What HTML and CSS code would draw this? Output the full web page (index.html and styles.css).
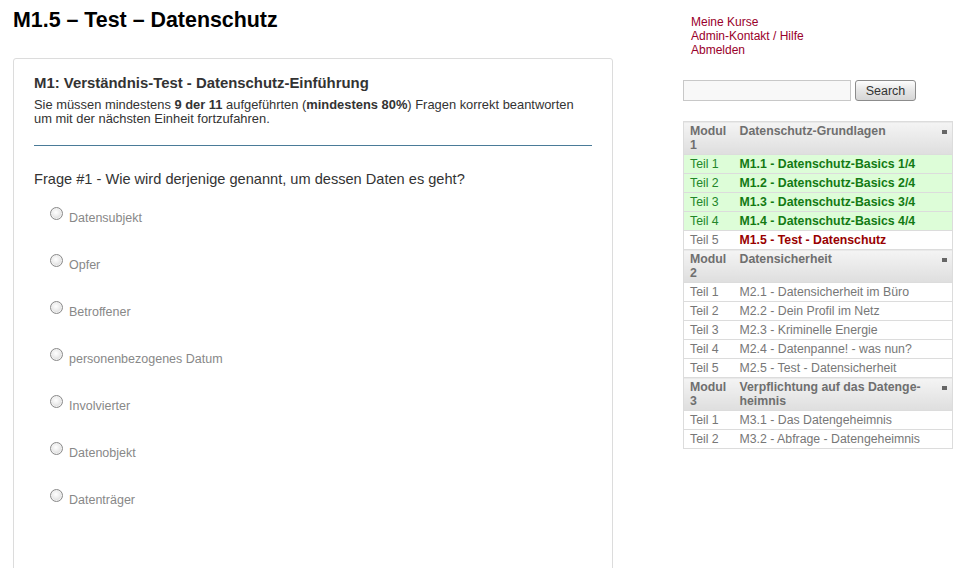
FILE: index.html
```html
<!DOCTYPE html>
<html lang="de">
<head>
<meta charset="utf-8">
<title>M1.5 – Test – Datenschutz</title>
<link rel="stylesheet" href="styles.css">
</head>
<body>
<div class="page">
  <main class="main">
    <h1 class="title">M1.5 – Test – Datenschutz</h1>
    <section class="card">
      <h2 class="card-title">M1: Verständnis-Test - Datenschutz-Einführung</h2>
      <p class="intro">Sie müssen mindestens <b>9 der 11</b> aufgeführten (<b>mindestens 80%</b>) Fragen korrekt beantworten<br>um mit der nächsten Einheit fortzufahren.</p>
      <hr class="rule">
      <p class="question">Frage #1 - Wie wird derjenige genannt, um dessen Daten es geht?</p>
      <div class="options">
        <label class="option"><input type="radio" name="q1" class="radio"><span>Datensubjekt</span></label>
        <label class="option"><input type="radio" name="q1" class="radio"><span>Opfer</span></label>
        <label class="option"><input type="radio" name="q1" class="radio"><span>Betroffener</span></label>
        <label class="option"><input type="radio" name="q1" class="radio"><span>personenbezogenes Datum</span></label>
        <label class="option"><input type="radio" name="q1" class="radio"><span>Involvierter</span></label>
        <label class="option"><input type="radio" name="q1" class="radio"><span>Datenobjekt</span></label>
        <label class="option"><input type="radio" name="q1" class="radio"><span>Datenträger</span></label>
      </div>
    </section>
  </main>
  <aside class="sidebar">
    <nav class="links">
      <a href="#">Meine Kurse</a>
      <a href="#">Admin-Kontakt / Hilfe</a>
      <a href="#">Abmelden</a>
    </nav>
    <form class="search">
      <input type="text" class="search-input">
      <button type="button" class="search-btn">Search</button>
    </form>
    <table class="course">
      <colgroup><col class="col1"><col class="col2"><col class="col3"></colgroup>
      <tr class="head"><td class="c1">Modul 1</td><td class="c2">Datenschutz-Grundlagen</td><td class="c3"><span class="toggle"></span></td></tr>
      <tr class="done"><td class="c1">Teil 1</td><td colspan="2"><b>M1.1 - Datenschutz-Basics 1/4</b></td></tr>
      <tr class="done"><td class="c1">Teil 2</td><td colspan="2"><b>M1.2 - Datenschutz-Basics 2/4</b></td></tr>
      <tr class="done"><td class="c1">Teil 3</td><td colspan="2"><b>M1.3 - Datenschutz-Basics 3/4</b></td></tr>
      <tr class="done"><td class="c1">Teil 4</td><td colspan="2"><b>M1.4 - Datenschutz-Basics 4/4</b></td></tr>
      <tr class="current"><td class="c1">Teil 5</td><td colspan="2"><b>M1.5 - Test - Datenschutz</b></td></tr>
      <tr class="head"><td class="c1">Modul 2</td><td class="c2">Datensicherheit</td><td class="c3"><span class="toggle"></span></td></tr>
      <tr><td class="c1">Teil 1</td><td colspan="2">M2.1 - Datensicherheit im Büro</td></tr>
      <tr><td class="c1">Teil 2</td><td colspan="2">M2.2 - Dein Profil im Netz</td></tr>
      <tr><td class="c1">Teil 3</td><td colspan="2">M2.3 - Kriminelle Energie</td></tr>
      <tr><td class="c1">Teil 4</td><td colspan="2">M2.4 - Datenpanne! - was nun?</td></tr>
      <tr><td class="c1">Teil 5</td><td colspan="2">M2.5 - Test - Datensicherheit</td></tr>
      <tr class="head"><td class="c1">Modul 3</td><td class="c2">Verpflichtung auf das Datenge-<br>heimnis</td><td class="c3"><span class="toggle"></span></td></tr>
      <tr><td class="c1">Teil 1</td><td colspan="2">M3.1 - Das Datengeheimnis</td></tr>
      <tr><td class="c1">Teil 2</td><td colspan="2">M3.2 - Abfrage - Datengeheimnis</td></tr>
    </table>
  </aside>
</div>
</body>
</html>
```
FILE: styles.css
```css
* { box-sizing: border-box; }
html, body {
  margin: 0;
  padding: 0;
  background: #fff;
  font-family: "Liberation Sans", Arial, sans-serif;
  color: #333;
  overflow: hidden;
}
.page {
  display: flex;
  gap: 70px;
  padding: 8px 0 0 13px;
}
.main { width: 600px; flex: none; }
.title {
  margin: 0;
  font-size: 21.4px;
  line-height: 25px;
  font-weight: bold;
  color: #000;
}
.card {
  margin-top: 25px;
  border: 1px solid #dcdcdc;
  border-radius: 3px;
  padding: 15px 20px 0 20px;
  min-height: 540px;
}
.card-title {
  margin: 0;
  font-size: 14.9px;
  line-height: 18px;
  font-weight: bold;
  color: #333;
}
.intro {
  margin: 6px 0 0 0;
  font-size: 12.9px;
  line-height: 14px;
  color: #333;
}
.rule {
  margin: 19px 0 0 0;
  border: 0;
  border-top: 1px solid #4a7b98;
  height: 0;
}
.question {
  margin: 24px 0 0 0;
  font-size: 14.6px;
  line-height: 19px;
  color: #333;
}
.options {
  display: flex;
  flex-direction: column;
  gap: 29px;
  margin-top: 18px;
  padding-left: 16px;
}
.option {
  display: flex;
  align-items: flex-start;
  font-size: 12.5px;
  line-height: 14px;
  color: #888;
}
.option span { margin-top: 4px; }
.radio {
  appearance: none;
  -webkit-appearance: none;
  width: 13px;
  height: 13px;
  margin: 0 6px 0 0;
  border: 1px solid #8a8a8a;
  border-radius: 50%;
  background: radial-gradient(circle at 45% 40%, #ffffff 0%, #eeeeee 40%, #c9c9c9 100%);
  box-shadow: inset 0 0 0 1px #f2f2f2;
  flex: none;
}
.sidebar {
  width: 271px;
  flex: none;
  padding-top: 7px;
}
.links {
  display: flex;
  flex-direction: column;
  padding-left: 8px;
  font-size: 12px;
  line-height: 14px;
}
.links a { color: #99002b; text-decoration: none; }
.search {
  display: flex;
  gap: 4px;
  margin: 23px 0 0 0;
}
.search-input {
  width: 168px;
  height: 21px;
  border: 1px solid #c8c8c8;
  background: #f8f8f8;
  margin: 0;
  padding: 0 3px;
}
.search-btn {
  width: 61px;
  height: 21px;
  margin: 0;
  padding: 0;
  border: 1px solid #8c8c8c;
  border-radius: 3px;
  background: linear-gradient(#fdfdfd, #e6e6e6 50%, #d6d6d6);
  font-family: "Liberation Sans", Arial, sans-serif;
  font-size: 12.5px;
  color: #333;
}
.course {
  margin-top: 20px;
  width: 270px;
  table-layout: fixed;
  border-collapse: collapse;
  border: 1px solid #dcdcdc;
  font-size: 12.3px;
  line-height: 14px;
  color: #777;
}
.col1 { width: 50px; }
.col3 { width: 18px; }
.course td {
  padding: 2px 6px 2px 6px;
  border-bottom: 1px solid #dcdcdc;
  vertical-align: top;
}
.course td.c1 { padding-right: 4px; }
.course .head td {
  padding-top: 2px;
  padding-bottom: 2px;
  font-weight: bold;
  color: #6f6f6f;
  background: linear-gradient(#f4f4f4, #dedede);
}
.course .head td.c2 { padding-right: 2px; }
.course .head td.c3 { padding: 0 5px 0 0; text-align: right; }
.toggle {
  display: block;
  margin: 8px 0 0 auto;
  width: 5px;
  height: 4px;
  background: #666;
}
.course .done td { background: #ddfdd8; color: #22862a; }
.course .done b { color: #137a13; }
.course .current b { color: #990000; }
```
